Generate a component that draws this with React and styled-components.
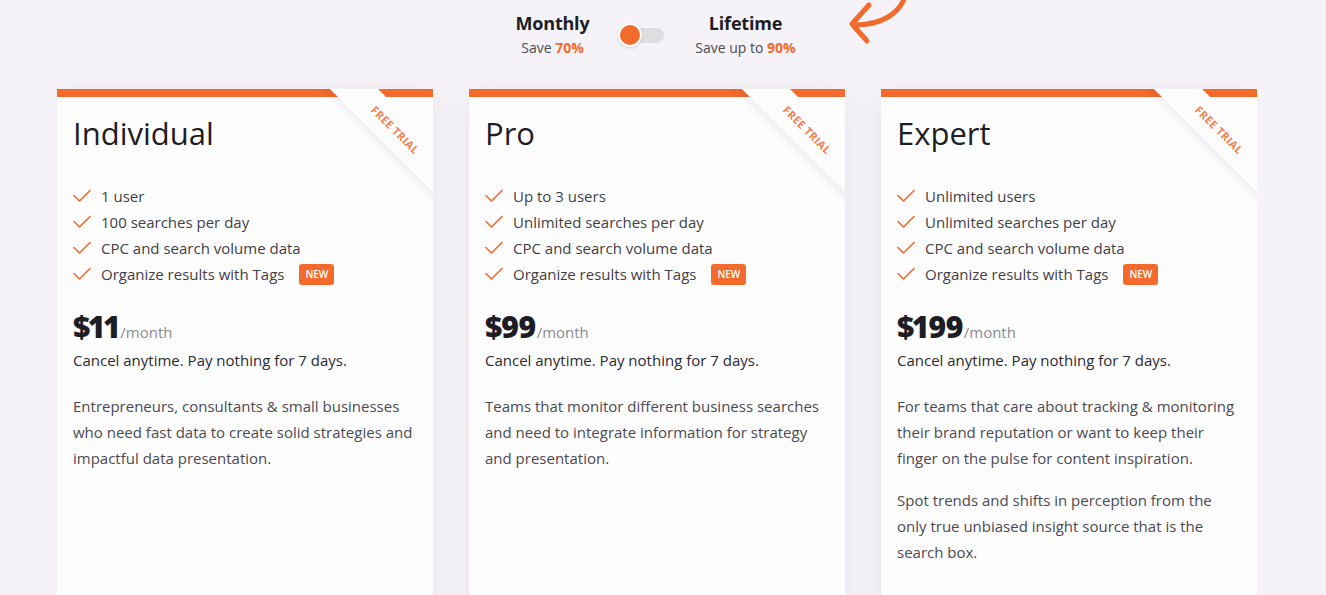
import React, { useState } from 'react';
import styled, { createGlobalStyle } from 'styled-components';

const orange = '#f26a2c';

const GlobalStyle = createGlobalStyle`
  body {
    margin: 0;
    background: #f6f3f8;
    font-family: "Open Sans", "Liberation Sans", sans-serif;
    color: #1d1d25;
  }
`
const Page = styled.div`
  width: 1200px;
  margin-left: 57px;
  height: 595px;
  overflow: hidden;
`
const Header = styled.div`
  position: relative;
  display: flex;
  justify-content: center;
  align-items: flex-start;
  height: 89px;
  padding-top: 9px;
  box-sizing: border-box;
  padding-right: 16px;
`
const Option = styled.div`
  width: ${p => p.width}px;
  text-align: center;
`
const OptionTitle = styled.div`
  font-size: 18px;
  font-weight: 700;
  line-height: 28px;
  letter-spacing: -0.2px;
`
const OptionSave = styled.div`
  font-size: 14px;
  line-height: 22px;
  color: #4a4a52;
  b {
    color: ${orange};
    font-weight: 700;
  }
`
const Toggle = styled.button`
  position: relative;
  width: 46px;
  height: 24px;
  margin: 14px 22px 0 5px;
  padding: 0;
  border: none;
  background: none;
  cursor: pointer;
  &::before {
    content: '';
    position: absolute;
    left: 6px;
    right: 0;
    top: 5px;
    height: 15px;
    border-radius: 8px;
    background: #dedde0;
  }
  &::after {
    content: '';
    position: absolute;
    left: ${p => (p.on ? 22 : 0)}px;
    top: 0;
    width: 20px;
    height: 20px;
    border-radius: 50%;
    background: ${orange};
    border: 2px solid #fff;
    box-shadow: 0 1px 3px rgba(0, 0, 0, 0.15);
  }
`
const Arrow = styled.svg`
  position: absolute;
  left: 788px;
  top: -5px;
`
const Cards = styled.div`
  display: grid;
  grid-template-columns: repeat(3, 376px);
  gap: 36px;
`
const Card = styled.div`
  position: relative;
  overflow: hidden;
  background: #fefdfe;
  height: 560px;
  padding: 24px 16px 0;
  box-shadow: 0 6px 28px rgba(70, 50, 90, 0.08);
  &::before {
    content: '';
    position: absolute;
    top: 0;
    left: 0;
    right: 0;
    height: 8px;
    background: ${orange};
  }
`
const Ribbon = styled.div`
  position: absolute;
  top: 24px;
  left: 238px;
  width: 200px;
  height: 34px;
  transform: rotate(45deg);
  background: #fefdfe;
  box-shadow: 0 5px 7px rgba(60, 40, 80, 0.07);
  color: ${orange};
  font-size: 11px;
  font-weight: 700;
  letter-spacing: 0.3px;
  text-align: center;
  line-height: 34px;
`
const RibbonText = styled.span`
  opacity: 0.85;
`
const Title = styled.h2`
  margin: 0 0 30px;
  font-size: 31px;
  font-weight: 400;
  line-height: 40px;
  color: #1d1d25;
`
const Features = styled.ul`
  list-style: none;
  margin: 0 0 20px;
  padding: 0;
`
const Feature = styled.li`
  display: flex;
  align-items: center;
  height: 26px;
  font-size: 15px;
  color: #3f3f47;
  svg {
    margin-right: 10px;
    flex-shrink: 0;
  }
`
const Badge = styled.span`
  margin-left: 15px;
  padding: 0 6px;
  height: 21px;
  line-height: 21px;
  border-radius: 3px;
  background: ${orange};
  color: #fff;
  font-size: 10px;
  font-weight: 600;
`
const Price = styled.div`
  display: flex;
  align-items: baseline;
  height: 40px;
  line-height: 40px;
  strong {
    font-size: 30px;
    font-weight: 800;
    letter-spacing: -1.2px;
    font-variant-numeric: proportional-nums;
    color: #1d1d25;
  }
  span {
    margin-left: 1px;
    font-size: 15px;
    color: #8a8a92;
  }
`
const Cancel = styled.div`
  font-size: 15px;
  line-height: 26px;
  color: #2a2a31;
  margin-bottom: 20px;
`
const Text = styled.p`
  margin: 0 0 16px;
  font-size: 15px;
  line-height: 26px;
  color: #4a4a52;
`

const Check = () => (
  <svg width="18" height="14" viewBox="0 0 18 14" fill="none">
    <path d="M1 6.5L6.5 12L17 1.5" stroke={orange} strokeWidth="1.6" strokeLinecap="round" strokeLinejoin="round" />
  </svg>
);

const plans = [
  {
    name: 'Individual',
    features: ['1 user', '100 searches per day'],
    price: '$11',
    text: [
      'Entrepreneurs, consultants & small businesses who need fast data to create solid strategies and impactful data presentation.',
    ],
  },
  {
    name: 'Pro',
    features: ['Up to 3 users', 'Unlimited searches per day'],
    price: '$99',
    text: [
      'Teams that monitor different business searches and need to integrate information for strategy and presentation.',
    ],
  },
  {
    name: 'Expert',
    features: ['Unlimited users', 'Unlimited searches per day'],
    price: '$199',
    text: [
      'For teams that care about tracking & monitoring their brand reputation or want to keep their finger on the pulse for content inspiration.',
      'Spot trends and shifts in perception from the only true unbiased insight source that is the search box.',
    ],
  },
];

const App = () => {
  const [lifetime, setLifetime] = useState(false);

  return (
    <>
      <GlobalStyle />
      <Page>
        <Header>
          <Option width={120}>
            <OptionTitle>Monthly</OptionTitle>
            <OptionSave>Save <b>70%</b></OptionSave>
          </Option>
          <Toggle on={lifetime ? 1 : 0} onClick={() => setLifetime(!lifetime)} />
          <Option width={120}>
            <OptionTitle>Lifetime</OptionTitle>
            <OptionSave>Save up to <b>90%</b></OptionSave>
          </Option>
          <Arrow width="70" height="52" viewBox="0 0 70 52" fill="none">
            <path d="M60 2 C54 18 38 30 9 30" stroke={orange} strokeWidth="5" strokeLinecap="round" />
            <path d="M24 10 L7 29 L22 46" stroke={orange} strokeWidth="5" strokeLinecap="round" strokeLinejoin="round" />
          </Arrow>
        </Header>
        <Cards>
          {plans.map(plan => (
            <Card key={plan.name}>
              <Ribbon><RibbonText>FREE TRIAL</RibbonText></Ribbon>
              <Title>{plan.name}</Title>
              <Features>
                {plan.features.map(f => (
                  <Feature key={f}><Check />{f}</Feature>
                ))}
                <Feature><Check />CPC and search volume data</Feature>
                <Feature><Check />Organize results with Tags<Badge>NEW</Badge></Feature>
              </Features>
              <Price>
                <strong>{plan.price}</strong>
                <span>/month</span>
              </Price>
              <Cancel>Cancel anytime. Pay nothing for 7 days.</Cancel>
              {plan.text.map(t => (
                <Text key={t}>{t}</Text>
              ))}
            </Card>
          ))}
        </Cards>
      </Page>
    </>
  );
}

export default App;
